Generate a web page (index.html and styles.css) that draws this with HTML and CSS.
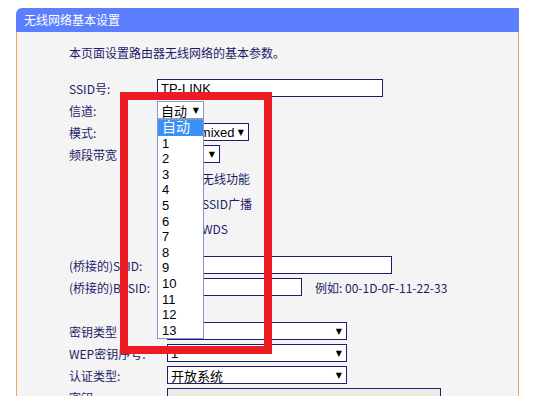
FILE: index.html
```html
<!DOCTYPE html>
<html lang="zh-CN">
<head>
    <meta charset="UTF-8">
    <title>无线网络基本设置</title>
    <link rel="stylesheet" href="styles.css">
</head>
<body>
    <div class="page">
        <div class="panel">
            <div class="panel-title">无线网络基本设置</div>
            <div class="panel-body">
                <p class="intro">本页面设置路由器无线网络的基本参数。</p>

                <div class="row">
                    <span class="label">SSID号:</span>
                    <input class="txt w-ssid" type="text" value="TP-LINK">
                </div>
                <div class="row">
                    <span class="label">信道:</span>
                    <div class="sel sel-open w-ch">
                        <span>自动</span><i>▼</i>
                        <ul class="dropdown">
                            <li class="active">自动</li>
                            <li>1</li><li>2</li><li>3</li><li>4</li>
                            <li>5</li><li>6</li><li>7</li><li>8</li>
                            <li>9</li><li>10</li><li>11</li><li>12</li>
                            <li>13</li>
                        </ul>
                    </div>
                </div>
                <div class="row">
                    <span class="label">模式:</span>
                    <div class="sel w-mode"><span>11bgn mixed</span><i>▼</i></div>
                </div>
                <div class="row">
                    <span class="label">频段带宽</span>
                    <div class="sel w-bw"><span>自动</span><i>▼</i></div>
                </div>

                <div class="checks">
                    <label class="check"><input type="checkbox" checked>开启无线功能</label>
                    <label class="check"><input type="checkbox" checked>开启SSID广播</label>
                    <label class="check"><input type="checkbox">开启WDS</label>
                </div>

                <div class="bridge">
                    <div class="row">
                        <span class="label">(桥接的)SSID:</span>
                        <input class="txt w-bssid-name" type="text">
                    </div>
                    <div class="row">
                        <span class="label">(桥接的)BSSID:</span>
                        <input class="txt w-mac" type="text">
                        <span class="hint">例如: 00-1D-0F-11-22-33</span>
                    </div>
                </div>

                <div class="security">
                    <div class="row">
                        <span class="label wide">密钥类型</span>
                        <div class="sel w-sec"><span>自动</span><i>▼</i></div>
                    </div>
                    <div class="row">
                        <span class="label wide">WEP密钥序号:</span>
                        <div class="sel w-sec"><span>1</span><i>▼</i></div>
                    </div>
                    <div class="row">
                        <span class="label wide">认证类型:</span>
                        <div class="sel w-sec"><span>开放系统</span><i>▼</i></div>
                    </div>
                    <div class="row">
                        <span class="label wide">密钥:</span>
                        <input class="txt txt-off w-key" type="text" disabled>
                    </div>
                </div>
            </div>
        </div>
    </div>

    <!-- red marker drawn over the screenshot -->
    <div class="marker"></div>
</body>
</html>
```

FILE: styles.css
```css
body {
    margin: 0;
    background-color: #fff;
    font-family: "Noto Sans CJK SC", sans-serif;
    font-size: 12px;
    color: #1c1c68;
}
.page {
    height: 396px;
    padding: 8px 0 0 16px;
    box-sizing: border-box;
    overflow: hidden;
}
.panel {
    width: 503px;
}
.panel-title {
    height: 24px;
    line-height: 24px;
    padding-left: 8px;
    background-color: #5b7ffd;
    color: #fff;
    border-top-left-radius: 6px;
}
.panel-body {
    height: 400px;
    padding: 13px 0 0 52px;
    background-color: #f4f4f4;
    border-left: 1px solid #f5a54f;
    border-right: 1px solid #f5a54f;
}
.intro {
    margin: 0 0 16px;
    height: 16px;
    line-height: 16px;
}
.row {
    display: flex;
    align-items: center;
    height: 22px;
}
.label {
    width: 88px;
    flex: none;
    white-space: nowrap;
}
.label.wide {
    width: 98px;
}
.txt {
    height: 18px;
    margin: 0;
    padding: 1px 3px 0;
    box-sizing: border-box;
    border: 1px solid #231b6b;
    background-color: #fff;
    font-family: "Liberation Sans", Arial, sans-serif;
    font-size: 13px;
    line-height: 15px;
    color: #000;
}
.txt-off {
    background-color: #ecebe4;
}
.sel {
    position: relative;
    display: flex;
    align-items: center;
    justify-content: space-between;
    height: 18px;
    padding: 0 4px 0 3px;
    box-sizing: border-box;
    border: 1px solid #231b6b;
    background-color: #fff;
    font-family: "Liberation Sans", "Noto Sans CJK SC", sans-serif;
    font-size: 13px;
    color: #000;
    white-space: nowrap;
}
.sel i {
    font-style: normal;
    font-family: "DejaVu Sans", sans-serif;
    font-size: 8px;
}
.sel-open {
    border-color: #7f9bd6;
}
.w-ssid { width: 226px; }
.w-ch { width: 47px; }
.w-mode { width: 92px; }
.w-bw { width: 63px; }
.w-bssid-name { width: 235px; }
.w-mac { width: 145px; }
.w-sec { width: 180px; }
.w-key { width: 274px; }

.dropdown {
    position: absolute;
    top: 17px;
    left: -1px;
    z-index: 5;
    width: 47px;
    margin: 0;
    padding: 0;
    list-style: none;
    background-color: #fff;
    border: 1px solid #8595c9;
    box-sizing: border-box;
}
.dropdown li {
    height: 15.6px;
    line-height: 15.6px;
    padding-left: 4px;
    font-size: 13px;
    color: #000;
}
.dropdown li.active {
    background-color: #3990f6;
    color: #fff;
    font-size: 14px;
}

.checks {
    margin-top: 1px;
    padding-left: 88px;
}
.check {
    display: flex;
    align-items: center;
    height: 25px;
    white-space: nowrap;
}
.check input {
    width: 13px;
    height: 13px;
    margin: 0 7px 0 1px;
}
.bridge {
    margin-top: 13px;
}
.hint {
    margin-left: 13px;
    white-space: nowrap;
}
.security {
    margin-top: 22px;
}

.marker {
    position: absolute;
    left: 120px;
    top: 92px;
    width: 152px;
    height: 262px;
    border: 8px solid #ed1c24;
    box-sizing: border-box;
    z-index: 10;
}
```
